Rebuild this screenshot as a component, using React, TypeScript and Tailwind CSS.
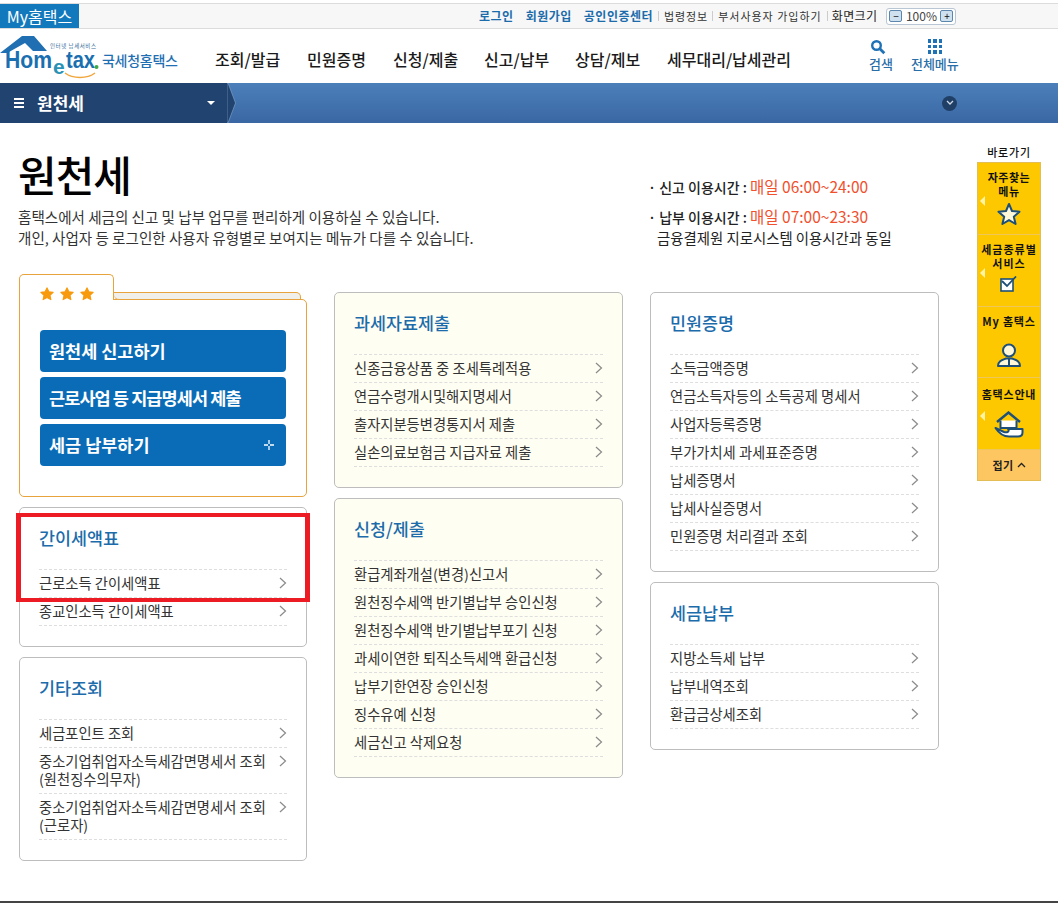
const KR = { fontFamily: '"Noto Sans CJK KR", "Noto Sans", sans-serif' }

const topLinks = ["로그인", "회원가입", "공인인증센터"]
const gnb = [
  { label: "조회/발급", w: "w-[92px]" },
  { label: "민원증명", w: "w-[86px]" },
  { label: "신청/제출", w: "w-[91px]" },
  { label: "신고/납부", w: "w-[91px]" },
  { label: "상담/제보", w: "w-[92px]" },
  { label: "세무대리/납세관리", w: "w-[140px]" },
]
const mainButtons = [
  { label: "원천세 신고하기", track: "tracking-[0px]" },
  { label: "근로사업 등 지급명세서 제출", track: "tracking-[-0.9px]" },
  { label: "세금 납부하기", track: "tracking-[0px]" },
]

function Chevron() {
  return (
    <svg width="8" height="12" viewBox="0 0 8 12" className="mt-[3px] shrink-0">
      <path d="M1 1l5.500 5L1 11" fill="none" stroke="#8a8a8a" strokeWidth="1.200" />
    </svg>
  )
}

function LinkCard({ title, items, yellow }: { title: string; items: string[][]; yellow?: boolean }) {
  return (
    <section
      className={`border border-[#bdbdbd] rounded-[5px] px-[19px] pb-[20px] ${yellow ? "bg-[#fffef2]" : "bg-white"}`}
    >
      <h3 className="h-[61px] pt-[17px] text-[17.400px] leading-[26px] font-medium text-[#1c6cab]">{title}</h3>
      <ul className="border-t border-dashed border-[#dedede]">
        {items.map((lines) => (
          <li
            key={lines[0]}
            className="flex justify-between border-b border-dashed border-[#dedede] pt-[4px] pb-[5px] text-[14.300px] leading-[18px] text-[#333]"
          >
            <div>
              {lines.map((line) => (
                <p key={line}>{line}</p>
              ))}
            </div>
            <Chevron />
          </li>
        ))}
      </ul>
    </section>
  )
}

function Star({ size = 14 }: { size?: number }) {
  return (
    <svg width={size} height={size} viewBox="0 0 24 24">
      <path
        d="M12 1.500l3.200 6.800 7.300.9-5.400 5 1.500 7.400L12 18l-6.600 3.600 1.500-7.400-5.400-5 7.300-.9z"
        fill="#f79a0c"
        stroke="#f79a0c"
        strokeWidth="2"
        strokeLinejoin="round"
      />
    </svg>
  )
}

function Pointer() {
  return <span className="absolute left-[2px] top-[33px] border-y-[5px] border-r-[5px] border-y-transparent border-r-[#fff3a8]" />
}

function QuickMenu() {
  const cell = "relative flex flex-col items-center border-b border-[#eec65a] text-[11px] leading-[14px] font-bold text-[#111] text-center"
  return (
    <aside className="w-[64px] shrink-0 pt-[21px]" >
      <p className="h-[18px] text-center text-[11px] leading-[16px] text-[#111] font-medium tracking-[0.800px]">바로가기</p>
      <div className="border border-[#e3bd55] bg-[#fdc800]">
        <div className={`${cell} h-[72px] pt-[7px] tracking-[0.500px]`}>
          <Pointer />
          <span>자주찾는<br />메뉴</span>
          <svg width="24" height="24" viewBox="0 0 24 24" className="mt-[4px]">
            <path d="M12 2l3 7 7.500.7-5.700 5 1.800 7.300L12 18.100 5.400 22l1.800-7.300-5.700-5L9 9z" fill="#fff8d8" stroke="#1d4f78" strokeWidth="2" strokeLinejoin="round" />
          </svg>
        </div>
        <div className={`${cell} h-[72px] pt-[7px] tracking-[1px]`}>
          <Pointer />
          <span>세금종류별<br />서비스</span>
          <svg width="18" height="16" viewBox="0 0 18 16" className="mt-[6px]">
            <rect x="1" y="3" width="12" height="12" fill="#fff" stroke="#1d4f78" strokeWidth="1.600" />
            <path d="M2 5l5 5 9-9.500" fill="none" stroke="#1d4f78" strokeWidth="1.800" />
          </svg>
        </div>
        <div className={`${cell} h-[71px] pt-[7px] tracking-[0.800px]`}>
          <span>My 홈택스</span>
          <svg width="26" height="26" viewBox="0 0 26 26" className="mt-[14px]">
            <circle cx="13" cy="8.500" r="6" fill="#fff8d8" stroke="#1d4f78" strokeWidth="2" />
            <path d="M2 24c0-5 4-6 8-7.500h6c4 1.500 8 2.500 8 7.500z" fill="#fff8d8" stroke="#1d4f78" strokeWidth="2" strokeLinejoin="round" />
            <path d="M13 16v7" stroke="#1d4f78" strokeWidth="2" />
          </svg>
        </div>
        <div className={`${cell} h-[72px] pt-[9px] tracking-[0.800px]`}>
          <Pointer />
          <span>홈택스안내</span>
          <svg width="30" height="27" viewBox="0 0 30 27" className="mt-[10px]">
            <path d="M3 11L14.500 1.500 26 11" fill="none" stroke="#1d4f78" strokeWidth="2.400" />
            <path d="M6.500 9.500V17h16V9.500" fill="#fff" stroke="#1d4f78" strokeWidth="2" />
            <path d="M1.500 17c4 6 8.500 8.500 13.500 8.500h9c2.500 0 4.500-1.500 4.500-4V18H14c2 2.500-1 4-4 3z" fill="#fff" stroke="#1d4f78" strokeWidth="2" strokeLinejoin="round" />
          </svg>
        </div>
        <div className="flex h-[30px] items-center justify-center bg-[#fdc661] text-[11px] font-bold text-[#222] tracking-[0.500px]">
          접기
          <svg width="9" height="6" viewBox="0 0 9 6" className="ml-[3px]">
            <path d="M1 5l3.500-3.500L8 5" fill="none" stroke="#222" strokeWidth="1.300" />
          </svg>
        </div>
      </div>
    </aside>
  )
}

export default function App() {
  return (
    <div className="flex h-[903px] flex-col overflow-hidden bg-white" style={KR}>
      {/* top bar */}
      <div className="mt-[3px] flex h-[26px] items-center border-y border-[#dcdcdc] bg-[#f7f7f7]">
        <div className="flex h-[24px] w-[79px] items-center justify-center bg-[#1379bd] text-[16px] text-white">My홈택스</div>
        <div className="ml-[400px] flex items-center gap-[12px] text-[12px] font-bold tracking-[0.500px] text-[#1c6cab]">
          {topLinks.map((t) => (
            <span key={t}>{t}</span>
          ))}
        </div>
        <span className="ml-[5px] h-[10px] border-l border-[#ccc]" />
        <span className="ml-[5px] text-[11px] text-[#333] tracking-[0.900px]">법령정보</span>
        <span className="ml-[4px] h-[10px] border-l border-[#ccc]" />
        <span className="ml-[5px] text-[11px] text-[#333] tracking-[1px]">부서사용자 가입하기</span>
        <span className="ml-[5px] h-[10px] border-l border-[#ccc]" />
        <span className="ml-[4px] text-[12px] text-[#222] tracking-[0.400px]">화면크기</span>
        <div className="ml-[9px] flex h-[17px] w-[70px] items-center justify-between rounded-[3px] border border-[#b9c6d3] bg-white px-[2px]">
          <span className="flex h-[12px] w-[13px] items-center justify-center rounded-[2px] border border-[#5d86ad] bg-[#cfe0ef] text-[10px] leading-none text-[#111]">−</span>
          <span className="text-[12px] text-[#444]">100%</span>
          <span className="flex h-[12px] w-[13px] items-center justify-center rounded-[2px] border border-[#5d86ad] bg-[#cfe0ef] text-[10px] leading-none text-[#111]">+</span>
        </div>
      </div>

      {/* header */}
      <header className="flex h-[54px] items-center">
        <div className="flex w-[215px] shrink-0">
          <svg width="180" height="46" viewBox="0 0 180 46" className="block">
            <path d="M0 20L22 3h12l13 15H33L25 10 9 19l-1 1H3z" fill="#1f6fb2" />
            <text x="5" y="35" fontFamily="Liberation Sans" fontWeight="700" fontSize="24" fill="#1a6fb0" textLength="47" lengthAdjust="spacingAndGlyphs">Hom</text>
            <text x="53" y="41" fontFamily="Liberation Sans" fontWeight="700" fontSize="21" fill="#2a93b5">e</text>
            <text x="66" y="35" fontFamily="Liberation Sans" fontWeight="700" fontSize="24" fill="#1a6fb0" textLength="29" lengthAdjust="spacingAndGlyphs">tax</text>
            <circle cx="96.500" cy="34" r="2" fill="#3fa648" />
            <path d="M65 40c8 6 22 6 30 0" fill="none" stroke="#f0a63c" strokeWidth="1.500" />
            <text x="50" y="15" fontFamily="Noto Sans CJK KR" fontSize="5.500" fill="#3a6f9e" textLength="46">인터넷 납세서비스</text>
            <text x="102" y="33" fontFamily="Noto Sans CJK KR" fontWeight="500" fontSize="14" fill="#1f6fb2" textLength="76">국세청홈택스</text>
          </svg>
        </div>
        <nav className="mt-[6px] flex text-[16px] font-medium text-[#1a1a1a]">
          {gnb.map((g) => (
            <span key={g.label} className={g.w}>{g.label}</span>
          ))}
        </nav>
        <div className="mb-[2px] ml-[62px] flex flex-col items-center text-[13px] leading-[17px] font-medium text-[#2a6ea8]">
          <svg width="16" height="16" viewBox="0 0 16 16" className="-translate-x-[3px]">
            <circle cx="6.500" cy="6.500" r="4.300" fill="none" stroke="#1f72b5" strokeWidth="2.400" />
            <path d="M9.800 9.800l4.500 4.500" stroke="#1f72b5" strokeWidth="2.800" />
          </svg>
          <span>검색</span>
        </div>
        <div className="mb-[2px] ml-[18px] flex flex-col items-center text-[13px] leading-[17px] font-medium text-[#2a6ea8]">
          <div className="grid grid-cols-3 gap-[2px] py-[1px]">
            {[1, 2, 3, 4, 5, 6, 7, 8, 9].map((n) => (
              <span key={n} className="h-[3.500px] w-[3.500px] bg-[#1f72b5]" />
            ))}
          </div>
          <span>전체메뉴</span>
        </div>
      </header>

      {/* sub nav */}
      <div className="flex h-[40px] items-center justify-between bg-linear-to-b from-[#4c80ba] to-[#3a67a4] pr-[101px]">
        <div className="flex h-full items-center">
          <div className="flex h-full w-[227px] items-center bg-[#20436f] pl-[14px] pr-[12px] text-white">
            <span className="flex h-[10px] w-[10px] flex-col justify-between">
              <i className="h-[2px] bg-white" />
              <i className="h-[2px] bg-white" />
              <i className="h-[2px] bg-white" />
            </span>
            <span className="ml-[13px] flex-1 text-[17px] font-bold">원천세</span>
            <span className="border-x-[4px] border-t-[4px] border-x-transparent border-t-white" />
          </div>
          <svg width="9" height="40" viewBox="0 0 9 40" className="block">
            <path d="M0 0h1l7.500 20L1 40H0z" fill="#20436f" stroke="#9bb6d6" strokeWidth="0.500" />
          </svg>
        </div>
        <span className="flex h-[15px] w-[15px] items-center justify-center rounded-full bg-[#1f3f66]">
          <svg width="8" height="6" viewBox="0 0 8 6">
            <path d="M1 1l3 3 3-3" fill="none" stroke="#cdd9e6" strokeWidth="1.300" />
          </svg>
        </span>
      </div>

      {/* content */}
      <div className="flex flex-1">
        <main className="w-[977px] shrink-0 pl-[19px]">
          <div className="flex h-[151px]">
            <div className="w-[629px] shrink-0">
              <h1 className="-ml-px mt-[22px] h-[57px] text-[42px] leading-[57px] font-medium tracking-[-1px] text-black">원천세</h1>
              <p className="-ml-px mt-[4px] text-[14.550px] leading-[21px] text-[#333]">
                홈택스에서 세금의 신고 및 납부 업무를 편리하게 이용하실 수 있습니다.
                <br />
                개인, 사업자 등 로그인한 사용자 유형별로 보여지는 메뉴가 다를 수 있습니다.
              </p>
            </div>
            <div className="pt-[53px] text-[14px] leading-[21px] text-[#222]">
              <p className="font-medium">
                · 신고 이용시간 : <span className="text-[15.500px] font-normal text-[#f1502d]">매일 06:00~24:00</span>
              </p>
              <p className="mt-[8px] font-medium">
                · 납부 이용시간 : <span className="text-[15.500px] font-normal text-[#f1502d]">매일 07:00~23:30</span>
              </p>
              <p className="-mt-px pl-[9px] text-[14.400px]">금융결제원 지로시스템 이용시간과 동일</p>
            </div>
          </div>

          <div className="flex items-start gap-[27px]">
            {/* column 1 */}
            <div className="flex w-[288px] shrink-0 flex-col gap-[10px]">
              <div>
                <div className="relative z-10 flex h-[26px] items-end">
                  <div className="flex h-[26px] w-[95px] gap-[6px] rounded-t-[5px] border-x border-t border-[#e8a33d] bg-white pl-[20px] pt-[12px]">
                    <Star />
                    <Star />
                    <Star />
                  </div>
                  <div className="h-[8px] w-[187px] rounded-tr-[5px] rounded-bl-[5px] border border-l-0 border-[#e8a33d] bg-[#f0efe9]" />
                </div>
                <div className="-mt-px rounded-b-[5px] rounded-tr-[5px] border border-[#e8a33d] bg-white px-[20px] pt-[30px] pb-[30px]">
                  <div className="flex flex-col gap-[5px]">
                    {mainButtons.map((b, i) => (
                      <div key={b.label} className="flex h-[42px] items-center justify-between rounded-[4px] bg-[#0a6cb6] pl-[9px] pr-[12px] text-[17.500px] font-bold text-white">
                        <span className={b.track}>{b.label}</span>
                        {i === 2 && (
                          <svg width="10" height="10" viewBox="0 0 10 10">
                            <path d="M5 0v4M5 6v4M0 5h4M6 5h4" stroke="#fff" strokeWidth="1.300" />
                          </svg>
                        )}
                      </div>
                    ))}
                  </div>
                </div>
              </div>

              <div className="relative">
                <LinkCard title="간이세액표" items={[["근로소득 간이세액표"], ["종교인소득 간이세액표"]]} />
                <div className="absolute left-[-3px] top-[6px] h-[89px] w-[294px] border-x-[5px] border-y-4 border-[#ed1c24]" />
              </div>
              <LinkCard
                title="기타조회"
                items={[
                  ["세금포인트 조회"],
                  ["중소기업취업자소득세감면명세서 조회", "(원천징수의무자)"],
                  ["중소기업취업자소득세감면명세서 조회", "(근로자)"],
                ]}
              />
            </div>

            {/* column 2 */}
            <div className="mt-[18px] flex w-[289px] shrink-0 flex-col gap-[10px]">
              <LinkCard
                yellow
                title="과세자료제출"
                items={[["신종금융상품 중 조세특례적용"], ["연금수령개시및해지명세서"], ["출자지분등변경통지서 제출"], ["실손의료보험금 지급자료 제출"]]}
              />
              <LinkCard
                yellow
                title="신청/제출"
                items={[
                  ["환급계좌개설(변경)신고서"],
                  ["원천징수세액 반기별납부 승인신청"],
                  ["원천징수세액 반기별납부포기 신청"],
                  ["과세이연한 퇴직소득세액 환급신청"],
                  ["납부기한연장 승인신청"],
                  ["징수유예 신청"],
                  ["세금신고 삭제요청"],
                ]}
              />
            </div>

            {/* column 3 */}
            <div className="mt-[18px] flex w-[289px] shrink-0 flex-col gap-[10px]">
              <LinkCard
                title="민원증명"
                items={[
                  ["소득금액증명"],
                  ["연금소득자등의 소득공제 명세서"],
                  ["사업자등록증명"],
                  ["부가가치세 과세표준증명"],
                  ["납세증명서"],
                  ["납세사실증명서"],
                  ["민원증명 처리결과 조회"],
                ]}
              />
              <LinkCard title="세금납부" items={[["지방소득세 납부"], ["납부내역조회"], ["환급금상세조회"]]} />
            </div>
          </div>
        </main>
        <QuickMenu />
      </div>

      <div className="h-[2px] bg-[#444]" />
    </div>
  )
}
